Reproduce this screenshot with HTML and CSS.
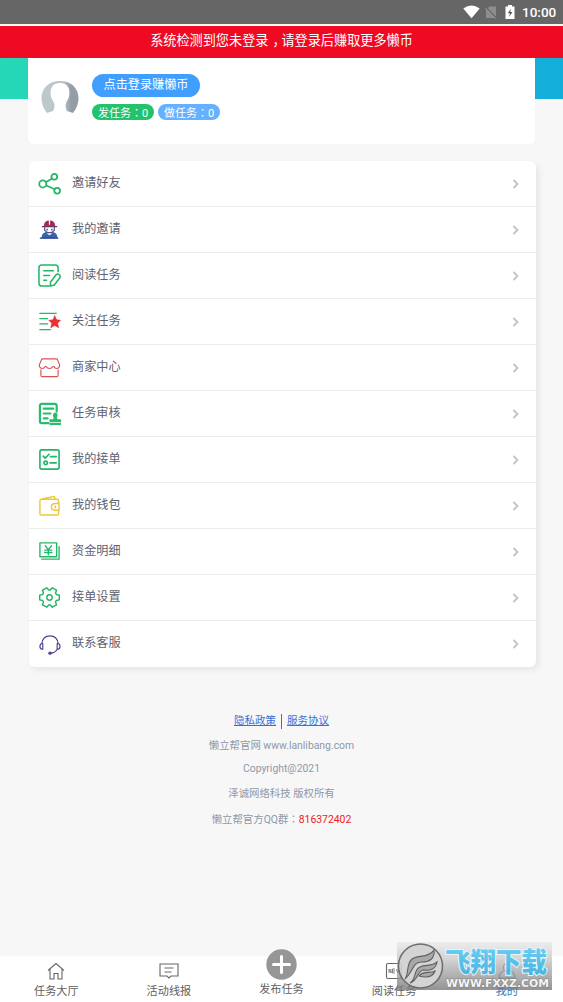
FILE: index.html
```html
<!DOCTYPE html>
<html lang="zh-CN">
<head>
<meta charset="utf-8">
<title>我的</title>
<link rel="stylesheet" href="styles.css">
</head>
<body>
<div class="app">
  <header class="status">
    <svg class="wifi" width="17" height="14" viewBox="0 0 17 14"><path d="M.3 3.4Q8.500-2.400 16.700 3.400L8.500 13.300Z" fill="#fff"/></svg>
    <svg class="sim" width="12" height="13" viewBox="0 0 12 13"><path d="M1 4 4.500.500H11V12H1Z" fill="#8d8d8d"/><path d="m.5 1 11 11.500" stroke="#666" stroke-width="1.800"/><path d="m.2 1.800 10.500 11" stroke="#999"/></svg>
    <svg class="battery" width="10" height="14" viewBox="0 0 10 14"><path d="M3 0h4v1.500h2.500V14h-9V1.500H3Z" fill="#fff"/><path d="M6 3.500 2.800 8.300H5L4 12l3.500-5H5.200Z" fill="#555"/></svg>
    <span class="clock">10:00</span>
  </header>
  <div class="notice"><span>系统检测到您未登录</span><span class="comma">，</span><span>请登录后赚取更多懒币</span></div>
  <section class="hero">
    <div class="profile">
      <svg class="avatar" width="38" height="38" viewBox="0 0 38 38"><defs><linearGradient id="hair"><stop offset=".2" stop-color="#bdc8cc"/><stop offset=".6" stop-color="#b9c2c8"/><stop offset=".8" stop-color="#949ca5"/></linearGradient></defs><path d="M6 33C-5 19 1 1 19 1s24 18 13 32q-3-1-6-2c-2-4-2-7 0-10 4-6 4-18-7-18S8 15 12 21c2 3 2 6 0 10q-3 1-6 2Z" fill="url(#hair)"/></svg>
      <div class="account">
        <div class="login">点击登录赚懒币</div>
        <div class="tags">
          <span class="tag green">发任务<i class="colon" lang="zh-TW">：</i>0</span>
          <span class="tag blue">做任务<i class="colon" lang="zh-TW">：</i>0</span>
        </div>
      </div>
    </div>
  </section>
  <main class="menu">
    <div class="row"><svg class="icon green-line" viewBox="0 0 24 24"><g stroke-width="1.800"><circle cx="5" cy="12.500" r="3.700"/><circle cx="17" cy="5" r="3"/><circle cx="20" cy="19.500" r="3"/><path d="m8.500 10.500 6-3.500M8.800 14l8.500 4"/></g></svg><span class="label">邀请好友</span><svg class="arrow" viewBox="0 0 8 10"><path d="m1.500 1 4 4-4 4"/></svg></div>
    <div class="row"><svg class="icon" viewBox="0 0 24 24"><path d="M3.500 21q0-7 8.500-7t8.500 7Z" fill="#3465ae"/><path d="M2.500 21h18" stroke="#293d83" stroke-width="1.500"/><path d="M7 10v3q5 5 10 0v-3" fill="#fff" stroke="#4c467c"/><path d="M6 8.500q0-6 6-6t6 6Z" fill="#b92b50"/><path d="M4.500 9h15M9.500 4v3M14.500 4v3" stroke="#643665"/><path d="M12 2.500v4" stroke="#fff"/><path d="M9.500 11.500v1M14.500 11.500v1" stroke="#333"/><path d="m9 16 3 2 3-2" fill="#fff"/></svg><span class="label">我的邀请</span><svg class="arrow" viewBox="0 0 8 10"><path d="m1.500 1 4 4-4 4"/></svg></div>
    <div class="row"><svg class="icon green-line" viewBox="0 0 24 24"><g stroke-width="1.600"><path d="M21 8V4q0-3-3-3H4Q1 1 1 4v16q0 3 3 3h8M6 7h10M6 12h6M6 17h3"/><path d="m13 19 6-8q1.500-1 3 0t1 3l-6 8-4 1Z"/></g></svg><span class="label">阅读任务</span><svg class="arrow" viewBox="0 0 8 10"><path d="m1.500 1 4 4-4 4"/></svg></div>
    <div class="row"><svg class="icon green-line" viewBox="0 0 24 24"><path d="M2 3.500h17M2 9h8M2 14.500h8M2 20.500h11" stroke-width="1.500"/><path d="m17.500 6 2 4.300 4 .4-3 3 1 4.800-4-2.300-4.200 2.300 1-4.800-3-3 4.200-.4Z" fill="#e93235" stroke="#e93235" stroke-width=".6"/></svg><span class="label">关注任务</span><svg class="arrow" viewBox="0 0 8 10"><path d="m1.500 1 4 4-4 4"/></svg></div>
    <div class="row"><svg class="icon red-line" viewBox="0 0 24 24"><path d="M4 3h16l2.500 6v2q-1 2-3 2t-3-2h-1q-1 2-3.500 2t-3.500-2h-1q-1 2-3 2t-3-2V9ZM3 14.500V20q0 1.500 1.500 1.500h15Q21 21.500 21 20v-5.500"/></svg><span class="label">商家中心</span><svg class="arrow" viewBox="0 0 8 10"><path d="m1.500 1 4 4-4 4"/></svg></div>
    <div class="row"><svg class="icon green-line bright" viewBox="0 0 24 24"><path d="M19.500 10V4q0-2-2-2H4Q2 2 2 4v16q0 2 2 2h7M6 7h10M6 12h7M6 17h4" stroke-width="2.300"/><path d="M18 11a3 3 0 0 1 1.700 5l.3 2h4v3H12v-3h4l.3-2A3 3 0 0 1 18 11ZM12 22h12v2H12Z" fill="#27bd6c" stroke="none"/></svg><span class="label">任务审核</span><svg class="arrow" viewBox="0 0 8 10"><path d="m1.500 1 4 4-4 4"/></svg></div>
    <div class="row"><svg class="icon green-line" viewBox="0 0 24 24"><g stroke-width="1.700"><rect x="2" y="2" width="20" height="20" rx="2"/><path d="m5.500 8.500 2 2 4-4M13 9h6M12.500 15.500H19"/><circle cx="8" cy="15.500" r="1.800"/></g></svg><span class="label">我的接单</span><svg class="arrow" viewBox="0 0 8 10"><path d="m1.500 1 4 4-4 4"/></svg></div>
    <div class="row"><svg class="icon yellow-line" viewBox="0 0 24 24"><path d="M21.500 10V7q0-1.500-1.500-1.500H3.500Q2 5.500 2 7v13.500Q2 22 3.500 22H20q1.500 0 1.500-1.500V17M5 5l12-2.500 1 3M22 10h-4q-4 0-4 3.500t4 3.500h4ZM18 12.500v2"/></svg><span class="label">我的钱包</span><svg class="arrow" viewBox="0 0 8 10"><path d="m1.500 1 4 4-4 4"/></svg></div>
    <div class="row"><svg class="icon green-line" viewBox="0 0 24 24"><path d="M2 3h17.500v14.500H2ZM22 7v13H4M7.500 6l3.300 4 3.300-4M7 10.500h7.500M7 13h7.500M10.800 10v5.500" stroke-width="1.400"/></svg><span class="label">资金明细</span><svg class="arrow" viewBox="0 0 8 10"><path d="m1.500 1 4 4-4 4"/></svg></div>
    <div class="row"><svg class="icon green-line" viewBox="0 0 24 24"><g stroke-width="1.500"><path d="M22.200 9.500V14.500L19.100 15.200 18.300 16.600 19.300 19.600 14.900 22.100 12.800 19.800H11.200L9.100 22.100 4.700 19.600 5.700 16.600 4.900 15.200 1.800 14.500V9.500L4.900 8.800 5.700 7.400 4.700 4.400 9.100 1.900 11.200 4.200H12.800L14.900 1.900 19.300 4.400 18.300 7.400 19.100 8.800Z"/><circle cx="12" cy="12" r="2.800"/></g></svg><span class="label">接单设置</span><svg class="arrow" viewBox="0 0 8 10"><path d="m1.500 1 4 4-4 4"/></svg></div>
    <div class="row"><svg class="icon purple-line" viewBox="0 0 24 24"><path d="M4 11q1-8 8.500-8T21 11M5 11v6q-3 0-3-3t3-3ZM20 11v6q3 0 3-3t-3-3ZM20 17q-2 4-7 4"/><circle cx="12.500" cy="21" r="1.200" fill="#543b91"/></svg><span class="label">联系客服</span><svg class="arrow" viewBox="0 0 8 10"><path d="m1.500 1 4 4-4 4"/></svg></div>
  </main>
  <footer class="about">
    <p class="links"><u>隐私政策</u><span class="bar"></span><u>服务协议</u></p>
    <p>懒立帮官网 www.lanlibang.com</p>
    <p>Copyright@2021</p>
    <p>泽诚网络科技 版权所有</p>
    <p>懒立帮官方QQ群<i class="colon" lang="zh-TW">：</i><b>816372402</b></p>
  </footer>
  <nav class="tabs">
    <div class="tab"><svg width="18" height="18" viewBox="0 0 18 18"><path d="m1 8.500 8-7 8 7M3 7v10h4v-5.500h4V17h4V7"/></svg><span>任务大厅</span></div>
    <div class="tab"><svg width="20" height="18" viewBox="0 0 20 18"><path d="M1 2h18v12h-7l-2 2-2-2H1ZM5.500 6h9M5.500 10h7"/></svg><span>活动线报</span></div>
    <div class="tab publish"><svg width="31" height="31" viewBox="0 0 31 31"><circle cx="15.500" cy="15.500" r="15.200" fill="#969696" stroke="none"/><path d="M15.500 7.500v16M7.500 15.500h16" stroke="#fff" stroke-width="3" stroke-linecap="round"/></svg><span>发布任务</span></div>
    <div class="tab"><svg width="18" height="18" viewBox="0 0 18 18"><rect x="1.500" y="1.500" width="15" height="15" rx="1.500"/><path d="M4 11V7l2 4V7M10 7H7.500v4H10M7.500 9H10M11.500 7l1 4 1-3 1 3 1-4" stroke-width=".8"/></svg><span>阅读任务</span></div>
    <div class="tab active"><svg width="18" height="18" viewBox="0 0 18 18"><circle cx="9" cy="5.500" r="3.800"/><path d="M5.500 9Q1 11 1 16h16q0-5-4.500-7"/></svg><span>我的</span></div>
  </nav>
  <div class="watermark">
    <svg width="155" height="48" viewBox="0 0 155 48">
      <defs><linearGradient id="shade" x2="0" y2="1"><stop stop-color="#ddd" stop-opacity=".45"/><stop offset=".5" stop-color="#aaa" stop-opacity=".75"/><stop offset="1" stop-color="#777" stop-opacity=".85"/></linearGradient><linearGradient id="sky" x2="0" y2="1"><stop stop-color="#6bd0f4"/><stop offset="1" stop-color="#35a9dc"/></linearGradient></defs>
      <path d="M0 0h155v48H0Z" fill="url(#shade)"/>
      <circle cx="23.500" cy="24" r="22" fill="#d1d1d1" stroke="#636363" stroke-width="1.500"/>
      <g fill="#a2a2a2" stroke="#555" stroke-width="1.100"><path d="M8 37c4-5 1-15 7-20 5-4 17-1 22-9 1 8-4 12-12 12-10 0-8 9-17 17Z"/><path d="M13 41c7-4 3-13 10-16 5-3 12 0 17-5-1 7-7 9-13 8-7 0-5 10-14 13Z"/><path d="M22 34c4-6 11-2 16-5-2 6-8 7-16 5Z"/></g>
      <text class="brand" x="48" y="30" textLength="102" lengthAdjust="spacingAndGlyphs">飞翔下载</text>
      <text class="site" x="49" y="44.500" textLength="103" lengthAdjust="spacingAndGlyphs">WWW.FXXZ.COM</text>
    </svg>
  </div>
</div>
</body>
</html>
```
FILE: styles.css
```css
* { box-sizing: border-box; }
body { margin: 0; background: #f7f7f7; font-family: Roboto, "Noto Sans CJK SC", sans-serif; }
.app { position: relative; width: 563px; height: 1002px; display: flex; flex-direction: column; overflow: hidden; }
svg { display: block; flex: none; fill: none; }
.colon { font-style: normal; font-family: "Noto Sans CJK TC", sans-serif; }
.status { height: 24px; background: #666; display: flex; align-items: center; padding-left: 463px; color: #fff; }
.sim { margin-left: 5px; }
.battery { margin-left: 8px; }
.clock { margin-left: 7px; font-size: 13.5px; line-height: 24px; font-weight: 500; }
.notice { display: flex; justify-content: center; height: 32px; margin-top: 2px; background: #ef0a24; color: #fff; font-size: 13.15px; line-height: 30px; box-shadow: 0 -1px #fff; }
.comma { width: 13px; text-indent: 4px; overflow: hidden; }
.hero { height: 41px; padding: 0 28px; background: linear-gradient(90deg, #27d8b7, #13aeda); }
.profile { height: 86px; background: #fff; border-radius: 0 0 6px 6px; display: flex; padding: 16px 13px 0; }
.avatar { margin-top: 6px; }
.account { margin-left: 13px; }
.login { width: 108px; height: 23px; border-radius: 12px; background: #409eff; color: #fff; font-size: 12.15px; line-height: 23px; text-align: center; }
.tags { display: flex; gap: 4px; margin-top: 7px; }
.tag { width: 62px; height: 16px; border-radius: 8px; color: #fff; font-size: 11px; line-height: 16px; text-align: center; white-space: nowrap; }
.green { background: #22c36c; }
.blue { background: #66b1ff; }
.menu { margin: 62px 27px 0 29px; height: 506px; background: #fff; border-radius: 6px; box-shadow: 3px 3px 6px rgba(0,0,0,.07); }
.row { height: 46px; display: flex; align-items: center; padding: 0 16px 0 9px; border-bottom: 1px solid #ebebeb; }
.row:last-child { border: 0; }
.icon { width: 23px; height: 23px; stroke-linecap: round; stroke-linejoin: round; stroke-width: 1.2; }
.green-line { stroke: #24b568; }
.bright { stroke: #27bd6c; }
.red-line { stroke: #d65353; }
.yellow-line { stroke: #ebc83d; stroke-width: 1.5; }
.purple-line { stroke: #543b91; }
.label { margin: -1px auto 0 11px; color: #606270; font-size: 12.15px; line-height: 20px; }
.row:last-child .label { margin-top: -2px; }
.arrow { width: 8px; height: 10px; stroke: #c3c3c3; stroke-width: 1.8; }
.about { margin-top: 41px; color: #8f97a8; font-size: 10.4px; text-align: center; }
.about p { margin: 0; height: 24.5px; line-height: 24px; white-space: pre; }
.about p:nth-child(2) { height: 22.5px; }
.about p:nth-child(3) { height: 25.5px; }
.about .links { display: flex; justify-content: center; align-items: center; color: #3a70d5; height: 26px; font-size: 10.5px; }
.bar { width: 1px; height: 15px; margin: 0 5px; background: #3a70d5; }
.about b { color: #ee1c1c; font-weight: 400; }
.tabs { height: 46px; margin-top: auto; background: #fff; display: flex; }
.tab { flex: 1; display: flex; flex-direction: column; align-items: center; padding-top: 6px; font-size: 11.15px; line-height: 16px; color: #606060; }
.tab svg { stroke: #666; stroke-width: 1.1; }
.tab span { margin-top: 4px; }
.publish { padding-top: 0; margin-top: -7px; }
.publish span { margin-top: 2px; }
.active { color: #287bc3; }
.active svg { stroke: #3884c4; }
.watermark { position: absolute; left: 397px; top: 942px; opacity: .93; }
.brand { font: 900 27px "Noto Sans CJK SC", sans-serif; fill: url(#sky); stroke: #e8f5fa; stroke-width: 2px; paint-order: stroke; }
.site { font: 700 11px "DejaVu Sans", sans-serif; fill: #f4f4f4; stroke: #777; stroke-width: 1px; paint-order: stroke; }
```
